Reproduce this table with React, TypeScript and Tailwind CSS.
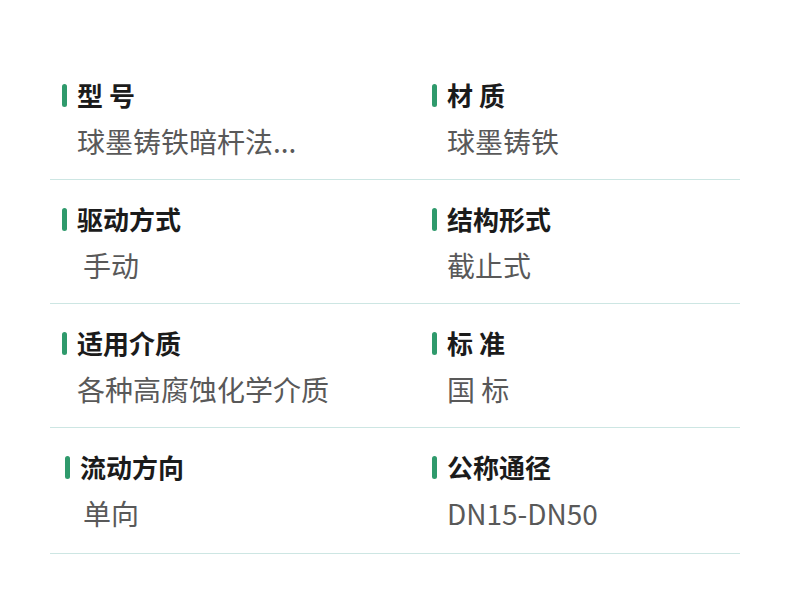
const font = { fontFamily: '"Noto Sans CJK SC", "Noto Sans", sans-serif' };

interface Spec {
  label: string;
  value: string;
  shift?: string;
  valueShift?: string;
}

const rows: [Spec, Spec][] = [
  [
    { label: "型 号", value: "球墨铸铁暗杆法..." },
    { label: "材 质", value: "球墨铸铁" },
  ],
  [
    { label: "驱动方式", value: "手动", valueShift: "ml-[6px]" },
    { label: "结构形式", value: "截止式" },
  ],
  [
    { label: "适用介质", value: "各种高腐蚀化学介质" },
    { label: "标 准", value: "国 标" },
  ],
  [
    { label: "流动方向", value: "单向", shift: "ml-[3px]", valueShift: "ml-[6px]" },
    { label: "公称通径", value: "DN15-DN50" },
  ],
];

function Cell({ spec }: { spec: Spec }) {
  return (
    <div className="pl-[12px]">
      <div className={`flex items-center h-[30px] ${spec.shift ?? ""}`}>
        <span className="w-[5px] h-[23px] rounded-full bg-[#2f9a6c] mr-[10px]" />
        <span className="text-[26px] font-bold text-[#1b1b1b] leading-[30px]">{spec.label}</span>
      </div>
      <div
        className={`mt-[13px] pl-[15px] text-[28px] text-[#595959] leading-[36px] whitespace-nowrap ${spec.valueShift ?? ""}`}
      >
        {spec.value}
      </div>
    </div>
  );
}

export default function App() {
  return (
    <div className="w-[790px] h-[600px] bg-white pt-[56px] px-[50px]" style={font}>
      {rows.map((pair, i) => (
        <div
          key={i}
          className={`grid grid-cols-[370px_1fr] pt-[24px] border-b border-[#cde6e3] ${i === 3 ? "h-[126px]" : "h-[124px]"}`}
        >
          <Cell spec={pair[0]} />
          <Cell spec={pair[1]} />
        </div>
      ))}
    </div>
  );
}
